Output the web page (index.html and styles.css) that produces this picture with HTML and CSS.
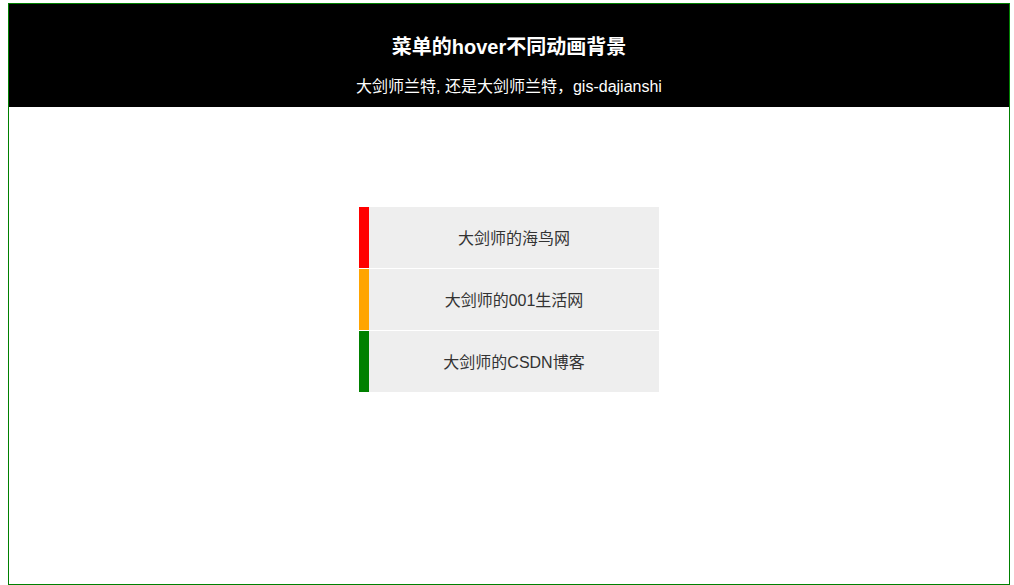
FILE: index.html
```html
<!DOCTYPE html>
<html lang="zh-CN">
<head>
<meta charset="utf-8">
<title>菜单的hover不同动画背景</title>
<link rel="stylesheet" href="styles.css">
</head>
<body>
<div class="page">
  <header class="header">
    <h1 class="title">菜单的hover不同动画背景</h1>
    <p class="subtitle">大剑师兰特, 还是大剑师兰特，gis-dajianshi</p>
  </header>
  <ul class="menu">
    <li class="item item-red">大剑师的海鸟网</li>
    <li class="item item-orange">大剑师的001生活网</li>
    <li class="item item-green">大剑师的CSDN博客</li>
  </ul>
</div>
</body>
</html>
```
FILE: styles.css
```css
html, body {
  margin: 0;
  padding: 0;
  background: #fff;
}
body {
  font-family: "Liberation Sans", Arial, "Noto Sans CJK SC", sans-serif;
  padding: 3px 4px 0 8px;
}
.page {
  border: 1px solid #008000;
  height: 580px;
  box-sizing: content-box;
}
.header {
  background: #000;
  color: #fff;
  text-align: center;
  padding: 31px 0 10px;
  height: 62px;
}
.title {
  margin: 0;
  font-size: 20px;
  line-height: 24px;
  font-weight: bold;
}
.subtitle {
  margin: 18px 0 0;
  font-size: 16px;
  line-height: 20px;
}
.menu {
  list-style: none;
  margin: 100px auto 0;
  padding: 0;
  width: 300px;
}
.item {
  height: 61px;
  line-height: 63px;
  background: #eee;
  color: #333;
  font-size: 16px;
  text-align: center;
  border-left: 10px solid red;
  margin-bottom: 1px;
}
.item-orange { border-left-color: orange; }
.item-green { border-left-color: green; }
```
